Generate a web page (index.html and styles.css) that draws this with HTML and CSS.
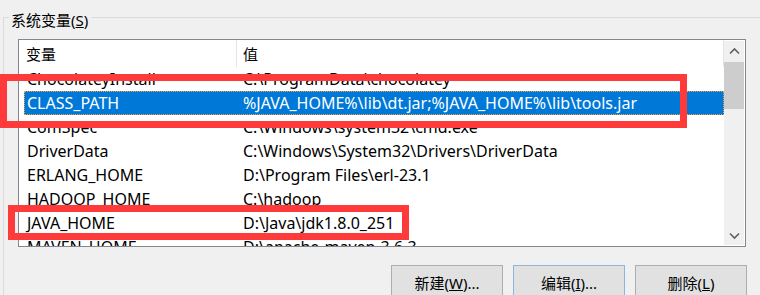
FILE: index.html
```html
<!DOCTYPE html>
<html lang="zh-CN">
<head>
    <meta charset="UTF-8">
    <title>系统变量</title>
    <link rel="stylesheet" href="styles.css">
</head>
<body>
    <fieldset class="group">
        <legend class="group-title">系统变量(<u>S</u>)</legend>

        <div class="listview">
            <div class="list-body">
                <div class="list-header">
                    <div class="col col-name">变量</div>
                    <div class="col col-value">值</div>
                </div>
                <div class="rows">
                    <div class="row"><span class="cell name">ChocolateyInstall</span><span class="cell value">C:\ProgramData\chocolatey</span></div>
                    <div class="row selected"><span class="cell name">CLASS_PATH</span><span class="cell value">%JAVA_HOME%\lib\dt.jar;%JAVA_HOME%\lib\tools.jar</span></div>
                    <div class="row"><span class="cell name">ComSpec</span><span class="cell value">C:\Windows\system32\cmd.exe</span></div>
                    <div class="row"><span class="cell name">DriverData</span><span class="cell value">C:\Windows\System32\Drivers\DriverData</span></div>
                    <div class="row"><span class="cell name">ERLANG_HOME</span><span class="cell value">D:\Program Files\erl-23.1</span></div>
                    <div class="row"><span class="cell name">HADOOP_HOME</span><span class="cell value">C:\hadoop</span></div>
                    <div class="row"><span class="cell name">JAVA_HOME</span><span class="cell value">D:\Java\jdk1.8.0_251</span></div>
                    <div class="row"><span class="cell name">MAVEN_HOME</span><span class="cell value">D:\apache-maven-3.6.3</span></div>
                </div>
            </div>

            <div class="scrollbar">
                <div class="sb-arrow">
                    <svg width="20" height="20" viewBox="0 0 20 20"><polyline points="6,12.5 10.5,8 15,12.5" fill="none" stroke="#606060" stroke-width="1.6"/></svg>
                </div>
                <div class="sb-track"><div class="sb-thumb"></div></div>
                <div class="sb-arrow">
                    <svg width="20" height="20" viewBox="0 0 20 20"><polyline points="6,8.5 10.5,13 15,8.5" fill="none" stroke="#606060" stroke-width="1.6"/></svg>
                </div>
            </div>
        </div>

        <div class="buttons">
            <button class="btn">新建(<u>W</u>)...</button>
            <button class="btn focused">编辑(<u>I</u>)...</button>
            <button class="btn">删除(<u>L</u>)</button>
        </div>
    </fieldset>

    <!-- annotation boxes -->
    <div class="mark mark-classpath"></div>
    <div class="mark mark-javahome"></div>
</body>
</html>
```

FILE: styles.css
```css
body {
    position: relative;
    margin: 0;
    width: 760px;
    height: 295px;
    overflow: hidden;
    background-color: #f0f0f0;
    font-family: "Noto Sans", "Noto Sans CJK SC", sans-serif;
    font-size: 15px;
    color: #000;
}

.group {
    margin: 5px 0 0 3px;
    padding: 9px 0 0 5px;
    width: 751px;
    height: 280px;
    border: 1px solid #dcdcdc;
    border-right: none;
    border-bottom: none;
}

.group-title {
    padding: 5px 3px 0 2px;
    line-height: 20px;
}

.listview {
    display: flex;
    margin-left: 9px;
    width: 728px;
    height: 208px;
    box-sizing: border-box;
    border: 1px solid #828790;
    padding-right: 1px;
    background-color: #fff;
}

.list-body {
    width: 705px;
    overflow: hidden;
}

.list-header {
    display: flex;
    height: 27px;
    line-height: 29px;
}

.col {
    box-sizing: border-box;
    border-right: 1px solid #e5e5e5;
}

.col-name {
    width: 218px;
    padding-left: 7px;
}

.col-value {
    flex: 1;
    padding-left: 6px;
}

.rows {
    margin-left: 5px;
    font-size: 16px;
}

.row {
    display: flex;
    height: 24px;
    line-height: 22px;
    box-sizing: border-box;
    border: 1px solid transparent;
    white-space: nowrap;
}

.row .name {
    width: 211px;
    padding-left: 2px;
    box-sizing: border-box;
}

.row .value {
    padding-left: 7px;
}

.row.selected {
    background-color: #0078d7;
    border: 1px dotted #f7a33a;
    color: #fff;
}

.scrollbar {
    display: flex;
    flex-direction: column;
    width: 20px;
    margin: 1px 0;
    background-color: #f0f0f0;
}

.sb-arrow {
    height: 20px;
}

.sb-arrow svg {
    display: block;
}

.sb-track {
    flex: 1;
}

.sb-thumb {
    margin-top: 1px;
    height: 47px;
    background-color: #cdcdcd;
}

.buttons {
    display: flex;
    justify-content: flex-end;
    gap: 10px;
    width: 729px;
    margin: 18px 0 0 9px;
}

.btn {
    width: 112px;
    height: 36px;
    padding: 0 0 2px;
    background-color: #e1e1e1;
    border: 1px solid #adadad;
    font-family: inherit;
    font-size: 15px;
    color: #000;
}

.btn.focused {
    border-color: #8fb4dc;
}

.mark {
    position: absolute;
    box-sizing: border-box;
    border: 7px solid #fe3a3a;
}

.mark-classpath {
    left: 0;
    top: 74px;
    width: 687px;
    height: 54px;
}

.mark-javahome {
    left: 8px;
    top: 205px;
    width: 401px;
    height: 35px;
}
```
